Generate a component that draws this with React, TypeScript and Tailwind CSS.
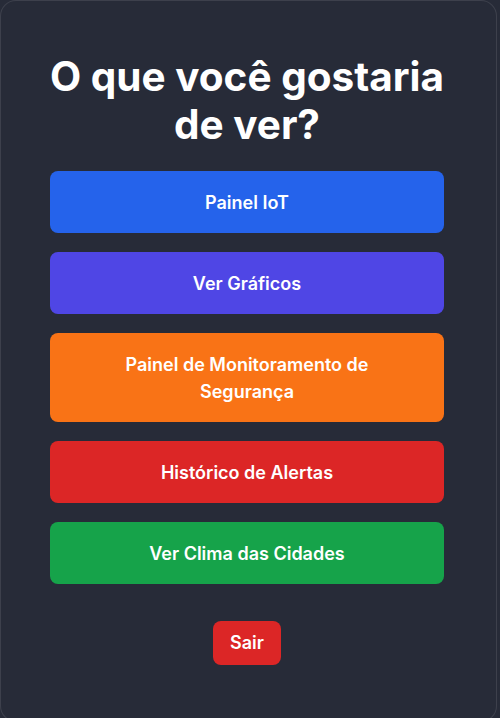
export default function App() {
  const options = [
    { label: "Painel IoT", color: "bg-[#2563eb]" },
    { label: "Ver Gráficos", color: "bg-[#4f46e5]" },
    { label: "Painel de Monitoramento de Segurança", color: "bg-[#f97316]" },
    { label: "Histórico de Alertas", color: "bg-[#dc2626]" },
    { label: "Ver Clima das Cidades", color: "bg-[#16a34a]" },
  ];

  return (
    <div className="min-h-screen bg-[#272b38] font-['Inter',sans-serif]">
      <div className="w-[497px] h-[722px] rounded-2xl border border-white/10 bg-[#272b38] pl-[49px] pr-[52px] pt-[52px] flex flex-col items-stretch">
        <h1 className="-mx-[12px] text-white text-[40.5px] leading-[48px] font-bold text-center mb-[22px]">
          O que você gostaria de ver?
        </h1>

        <div className="flex flex-col gap-[19px]">
          {options.map((o) => (
            <button
              key={o.label}
              className={`${o.color} rounded-lg text-white font-semibold text-[18px] leading-[27px] py-[17.5px] px-[70px] text-center`}
            >
              {o.label}
            </button>
          ))}
        </div>

        <div className="flex justify-center mt-[37px]">
          <button className="bg-[#dc2626] rounded-lg text-white font-semibold text-[18px] leading-[28px] py-2 px-[17.5px]">
            Sair
          </button>
        </div>
      </div>
    </div>
  );
}
